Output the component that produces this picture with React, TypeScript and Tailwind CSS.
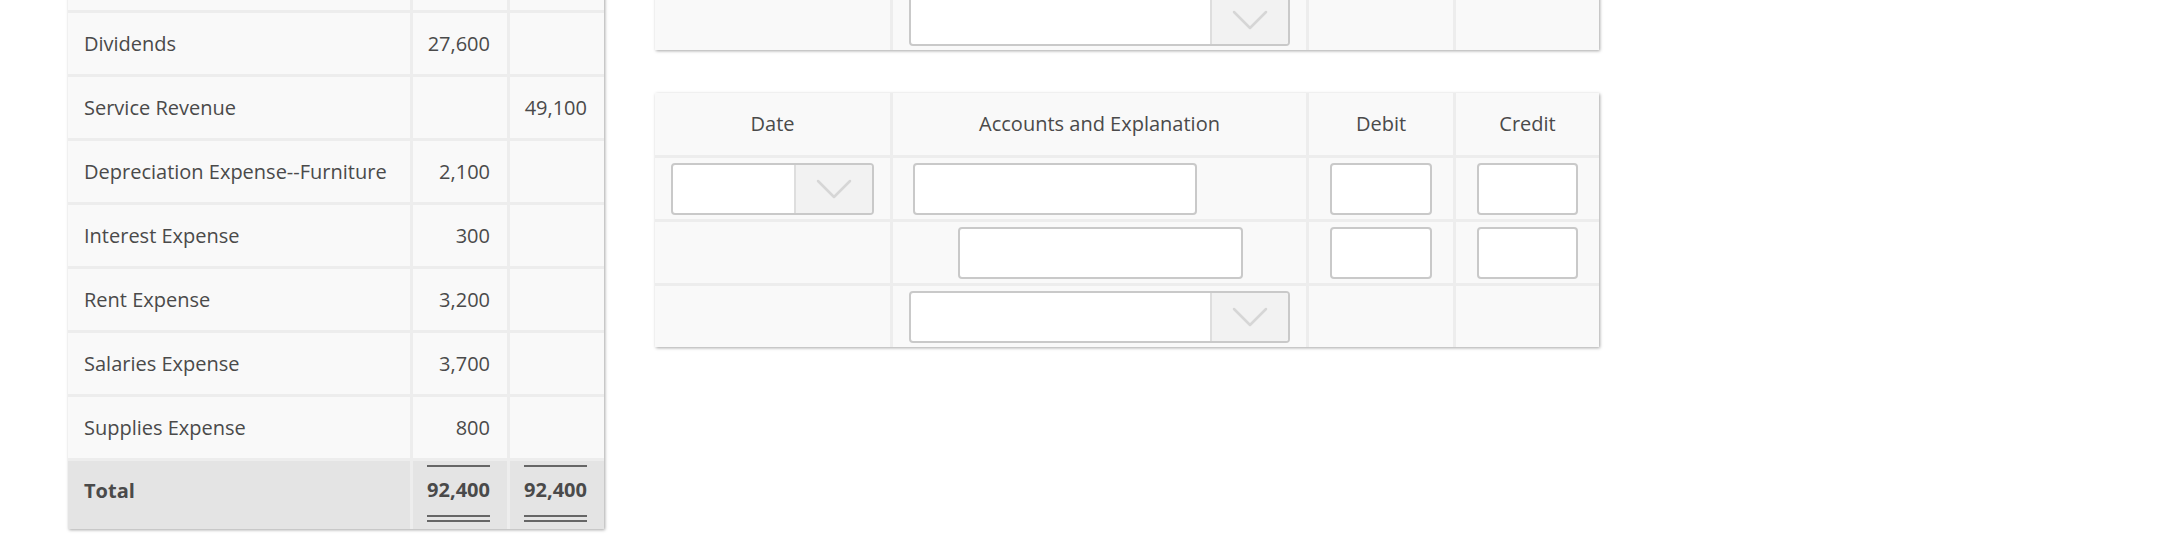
import React from "react";

type TrialRow = { account: string; debit?: string; credit?: string };

const trialRows: TrialRow[] = [
  { account: "Dividends", debit: "27,600" },
  { account: "Service Revenue", credit: "49,100" },
  { account: "Depreciation Expense--Furniture", debit: "2,100" },
  { account: "Interest Expense", debit: "300" },
  { account: "Rent Expense", debit: "3,200" },
  { account: "Salaries Expense", debit: "3,700" },
  { account: "Supplies Expense", debit: "800" },
];

function Chevron() {
  return (
    <svg width="36" height="20" viewBox="0 0 36 20" fill="none">
      <polyline
        points="2,2 18,18 34,2"
        stroke="#d6d6d6"
        strokeWidth="2.5"
        strokeLinecap="round"
        strokeLinejoin="round"
      />
    </svg>
  );
}

function SelectBox({ className }: { className: string }) {
  return (
    <div
      className={`flex h-[52px] overflow-hidden rounded-[4px] border-2 border-[#c9c9c9] bg-white ${className}`}
    >
      <div className="flex-1" />
      <div className="flex w-[78px] items-center justify-center border-l-2 border-[#dedede] bg-[#f2f2f2]">
        <Chevron />
      </div>
    </div>
  );
}

function TextBox({ className }: { className: string }) {
  return (
    <input
      type="text"
      className={`h-[52px] rounded-[4px] border-2 border-[#c9c9c9] bg-white outline-none ${className}`}
    />
  );
}

function TotalCell({ value }: { value: string }) {
  return (
    <div className="flex h-[68px] justify-end bg-[#e4e4e4] px-[17px]">
      <div className="flex flex-col pt-[4px]">
        <div className="h-[2px] bg-[#666666]" />
        <div className="mt-[5px] text-right font-bold leading-[36px]">{value}</div>
        <div className="mt-[7px] h-[7px] border-y-2 border-[#666666]" />
      </div>
    </div>
  );
}

function TrialBalance() {
  return (
    <div className="-mt-[51px] w-[536px] shrink-0 bg-[#ededed] shadow-[1px_1px_3px_rgba(0,0,0,0.35)]">
      <div className="grid grid-cols-[342px_94px_94px] gap-[3px]">
        {/* row above, mostly scrolled out of view */}
        <div className="h-[61px] bg-[#f9f9f9]" />
        <div className="h-[61px] bg-[#f9f9f9]" />
        <div className="h-[61px] bg-[#f9f9f9]" />

        {trialRows.map((row) => (
          <React.Fragment key={row.account}>
            <div className="flex h-[61px] items-center bg-[#f9f9f9] px-4">{row.account}</div>
            <div className="flex h-[61px] items-center justify-end bg-[#f9f9f9] px-[17px]">
              {row.debit}
            </div>
            <div className="flex h-[61px] items-center justify-end bg-[#f9f9f9] px-[17px]">
              {row.credit}
            </div>
          </React.Fragment>
        ))}

        <div className="flex h-[68px] items-center bg-[#e4e4e4] px-4 pb-[8px] font-bold">Total</div>
        <TotalCell value="92,400" />
        <TotalCell value="92,400" />
      </div>
    </div>
  );
}

function JournalTable({ children, className }: { children: React.ReactNode; className: string }) {
  return (
    <div
      className={`grid grid-cols-[235px_413px_144px_143px] gap-[3px] bg-[#ededed] shadow-[1px_1px_3px_rgba(0,0,0,0.35)] ${className}`}
    >
      {children}
    </div>
  );
}

function App() {
  const cell = "flex h-[61px] items-center bg-[#f9f9f9]";
  const head = "flex h-[62px] items-center justify-center bg-[#f9f9f9]";

  return (
    <div className="h-[554px] w-full overflow-hidden bg-white font-['Open_Sans','Liberation_Sans',sans-serif] text-[20px] text-[#4a4a4a]">
      <div className="flex items-start pl-[68px]">
        <TrialBalance />

        <div className="ml-[51px] flex w-[944px] flex-col">
          {/* previous entry, cut off at the top */}
          <JournalTable className="-mt-[11px]">
            <div className={cell} />
            <div className={`${cell} justify-center`}>
              <SelectBox className="w-[381px]" />
            </div>
            <div className={cell} />
            <div className={cell} />
          </JournalTable>

          <JournalTable className="mt-[43px]">
            <div className={head}>Date</div>
            <div className={head}>Accounts and Explanation</div>
            <div className={head}>Debit</div>
            <div className={head}>Credit</div>

            <div className={`${cell} px-4`}>
              <SelectBox className="w-[203px]" />
            </div>
            <div className={`${cell} pl-[20px]`}>
              <TextBox className="w-[284px]" />
            </div>
            <div className={`${cell} justify-center`}>
              <TextBox className="w-[102px]" />
            </div>
            <div className={`${cell} justify-center`}>
              <TextBox className="w-[101px]" />
            </div>

            <div className={cell} />
            <div className={`${cell} pl-[65px]`}>
              <TextBox className="w-[285px]" />
            </div>
            <div className={`${cell} justify-center`}>
              <TextBox className="w-[102px]" />
            </div>
            <div className={`${cell} justify-center`}>
              <TextBox className="w-[101px]" />
            </div>

            <div className={cell} />
            <div className={`${cell} justify-center`}>
              <SelectBox className="w-[381px]" />
            </div>
            <div className={cell} />
            <div className={cell} />
          </JournalTable>
        </div>
      </div>
    </div>
  );
}

export default App;
